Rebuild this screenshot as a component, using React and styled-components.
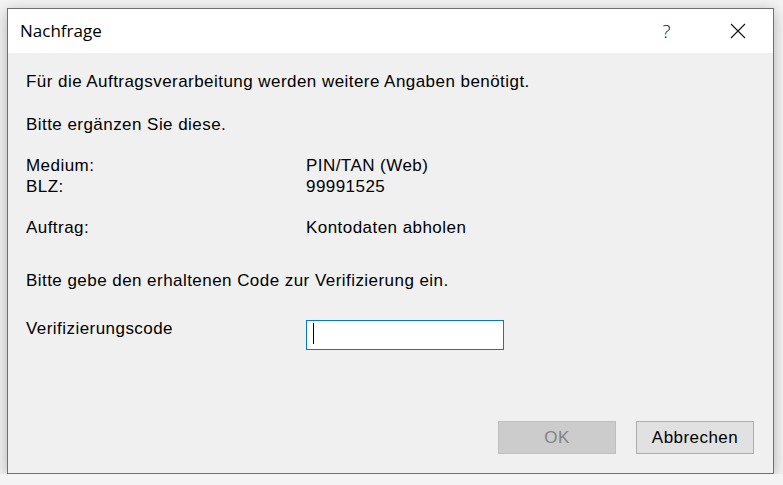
import React from 'react';
import styled, { createGlobalStyle } from 'styled-components';

const GlobalStyle = createGlobalStyle`
	html, body {
		margin: 0;
		padding: 0;
		background: #f4f4f4;
	}
`;

const Window = styled.div`
	box-sizing: border-box;
	margin: 8px 0 0 7px;
	width: 767px;
	height: 466px;
	border: 1px solid #6f6f6f;
	background: #f0f0f0;
	box-shadow: 0 3px 14px rgba(0, 0, 0, 0.28);
	display: flex;
	flex-direction: column;
`;

const TitleBar = styled.div`
	height: 44px;
	background: #ffffff;
	display: flex;
	align-items: center;
	padding-left: 12px;
	font-family: 'Open Sans', 'Noto Sans', sans-serif;
	font-size: 17px;
	color: #000;
`;

const Title = styled.div`
	flex: 1;
	margin-top: -1px;
`;

const TitleButton = styled.div`
	width: 71px;
	height: 44px;
	display: flex;
	align-items: center;
	justify-content: center;
	font-size: 19px;
	font-weight: 300;
	color: #111;
`;

const Body = styled.div`
	flex: 1;
	display: flex;
	flex-direction: column;
	padding: 18px 19px 19px 18px;
	font-family: 'Liberation Sans', Arial, sans-serif;
	font-size: 17px;
	letter-spacing: 0.45px;
	line-height: 21px;
	color: #000;
`;

const Line = styled.div`
	margin-top: ${(p) => p.$gap || 0}px;
`;

const Row = styled.div`
	display: grid;
	grid-template-columns: 280px 1fr;
	margin-top: ${(p) => p.$gap || 0}px;
`;

const FieldRow = styled.div`
	display: grid;
	grid-template-columns: 280px 198px;
	align-items: start;
	margin-top: ${(p) => p.$gap || 0}px;
`;

const FieldLabel = styled.div`
	margin-top: -2px;
`;

const TextBox = styled.div`
	box-sizing: border-box;
	height: 30px;
	border: 1px solid #0078d7;
	background: #ffffff;
	padding: 2px 0 0 6px;
`;

const Caret = styled.div`
	width: 1px;
	height: 21px;
	background: #000;
`;

const Footer = styled.div`
	margin-top: auto;
	display: flex;
	justify-content: flex-end;
	gap: 20px;
`;

const Button = styled.div`
	box-sizing: border-box;
	width: 118px;
	height: 33px;
	display: flex;
	align-items: center;
	justify-content: center;
	border: 1px solid ${(p) => (p.$disabled ? '#bfbfbf' : '#adadad')};
	background: ${(p) => (p.$disabled ? '#cccccc' : '#e1e1e1')};
	color: ${(p) => (p.$disabled ? '#838383' : '#000000')};
`;

function CloseIcon() {
	return (
		<svg width="16" height="16" viewBox="0 0 16 16">
			<path d="M1 1 L15 15 M15 1 L1 15" stroke="#111" strokeWidth="1.1" fill="none" />
		</svg>
	);
}

export default function App() {
	return (
		<>
			<GlobalStyle />
			<Window>
				<TitleBar>
					<Title>Nachfrage</Title>
					<TitleButton>?</TitleButton>
					<TitleButton>
						<CloseIcon />
					</TitleButton>
				</TitleBar>
				<Body>
					<Line>Für die Auftragsverarbeitung werden weitere Angaben benötigt.</Line>
					<Line $gap={22}>Bitte ergänzen Sie diese.</Line>
					<Row $gap={20}>
						<div>Medium:</div>
						<div>PIN/TAN (Web)</div>
					</Row>
					<Row>
						<div>BLZ:</div>
						<div>99991525</div>
					</Row>
					<Row $gap={20}>
						<div>Auftrag:</div>
						<div>Kontodaten abholen</div>
					</Row>
					<Line $gap={32}>Bitte gebe den erhaltenen Code zur Verifizierung ein.</Line>
					<FieldRow $gap={29}>
						<FieldLabel>Verifizierungscode</FieldLabel>
						<TextBox>
							<Caret />
						</TextBox>
					</FieldRow>
					<Footer>
						<Button $disabled>OK</Button>
						<Button>Abbrechen</Button>
					</Footer>
				</Body>
			</Window>
		</>
	);
}
